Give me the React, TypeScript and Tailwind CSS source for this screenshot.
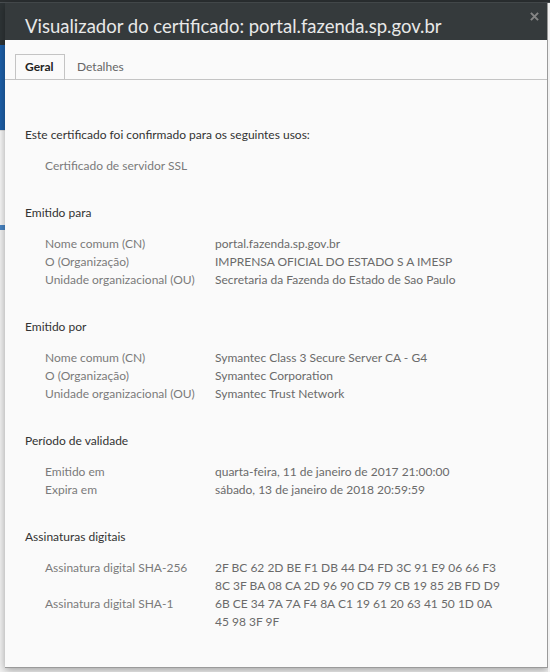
import React from 'react';

type Row = { label: string; value: string[] };

const sections: { title: string; rows: Row[] }[] = [
  {
    title: 'Emitido para',
    rows: [
      { label: 'Nome comum (CN)', value: ['portal.fazenda.sp.gov.br'] },
      { label: 'O (Organização)', value: ['IMPRENSA OFICIAL DO ESTADO S A IMESP'] },
      { label: 'Unidade organizacional (OU)', value: ['Secretaria da Fazenda do Estado de Sao Paulo'] },
    ],
  },
  {
    title: 'Emitido por',
    rows: [
      { label: 'Nome comum (CN)', value: ['Symantec Class 3 Secure Server CA - G4'] },
      { label: 'O (Organização)', value: ['Symantec Corporation'] },
      { label: 'Unidade organizacional (OU)', value: ['Symantec Trust Network'] },
    ],
  },
  {
    title: 'Período de validade',
    rows: [
      { label: 'Emitido em', value: ['quarta-feira, 11 de janeiro de 2017 21:00:00'] },
      { label: 'Expira em', value: ['sábado, 13 de janeiro de 2018 20:59:59'] },
    ],
  },
  {
    title: 'Assinaturas digitais',
    rows: [
      {
        label: 'Assinatura digital SHA-256',
        value: [
          '2F BC 62 2D BE F1 DB 44 D4 FD 3C 91 E9 06 66 F3',
          '8C 3F BA 08 CA 2D 96 90 CD 79 CB 19 85 2B FD D9',
        ],
      },
      {
        label: 'Assinatura digital SHA-1',
        value: ['6B CE 34 7A 7A F4 8A C1 19 61 20 63 41 50 1D 0A', '45 98 3F 9F'],
      },
    ],
  },
];

function Section({ title, rows }: { title: string; rows: Row[] }) {
  return (
    <div className="mt-[29px]">
      <div className="text-[#333] leading-[18px]">{title}</div>
      <div className="mt-[13px] pl-5">
        {rows.map((row) => (
          <div key={row.label} className="flex leading-[18px]">
            <div className="w-[170px] text-[#7a7a7a]">{row.label}</div>
            <div className="text-[#6a6a6a]">
              {row.value.map((v) => (
                <div key={v}>{v}</div>
              ))}
            </div>
          </div>
        ))}
      </div>
    </div>
  );
}

export default function App() {
  return (
    <div
      className="w-[550px] h-[672px] overflow-hidden bg-[#f2f2f2] flex flex-col"
      style={{ fontFamily: 'Lato, "Open Sans", sans-serif' }}
    >
      <div className="h-[3px] shrink-0 bg-[#2b2f31] border-b border-[#4a4f52]" />
      <div className="flex flex-1">
        {/* page behind the dialog, left edge */}
        <div className="w-[5px] shrink-0 flex flex-col">
          <div className="h-[42px] bg-[#2e3436]" />
          <div className="h-[85px] bg-[#1d5fa8]" />
          <div className="h-[95px] bg-[#f7f7f7] border-t border-[#ddd]" />
          <div className="h-[5px] bg-[#4a86c5]" />
          <div className="flex-1 bg-[#f2f2f2]" />
        </div>

        <div className="w-[543px] h-[665px] shrink-0 flex flex-col bg-[#fafafa] border-r border-b border-[#9a9a9a] shadow-[0_2px_8px_rgba(0,0,0,0.35)]">
          <div className="h-[37px] bg-[#353a3c] flex items-end justify-between pl-5 pr-[8px] pb-[1px]">
            <div className="text-[18.5px] text-[#e8e8e8] leading-[26px]">
              Visualizador do certificado: portal.fazenda.sp.gov.br
            </div>
            <svg width="9" height="9" viewBox="0 0 10 10" className="self-start mt-[9px]">
              <path d="M1 1L9 9M9 1L1 9" stroke="#858585" strokeWidth="2.2" />
            </svg>
          </div>

          <div className="pt-[14px] px-[10px] border-b border-[#c4c4c4] flex text-[12px]">
            <div className="h-[25px] w-[50px] pl-[9px] flex items-center bg-[#fafafa] border border-b-0 border-[#c4c4c4] font-bold text-[#222] -mb-px">
              Geral
            </div>
            <div className="h-[25px] pl-[12px] flex items-center text-[#666]">Detalhes</div>
          </div>

          <div className="px-5 pt-[46px] text-[12px]">
            <div className="text-[#333] leading-[18px]">
              Este certificado foi confirmado para os seguintes usos:
            </div>
            <div className="mt-[13px] pl-5 text-[#7a7a7a] leading-[18px]">Certificado de servidor SSL</div>
            {sections.map((s) => (
              <Section key={s.title} title={s.title} rows={s.rows} />
            ))}
          </div>
        </div>

        <div className="flex-1 bg-[#f2f2f2]" />
      </div>
    </div>
  );
}
